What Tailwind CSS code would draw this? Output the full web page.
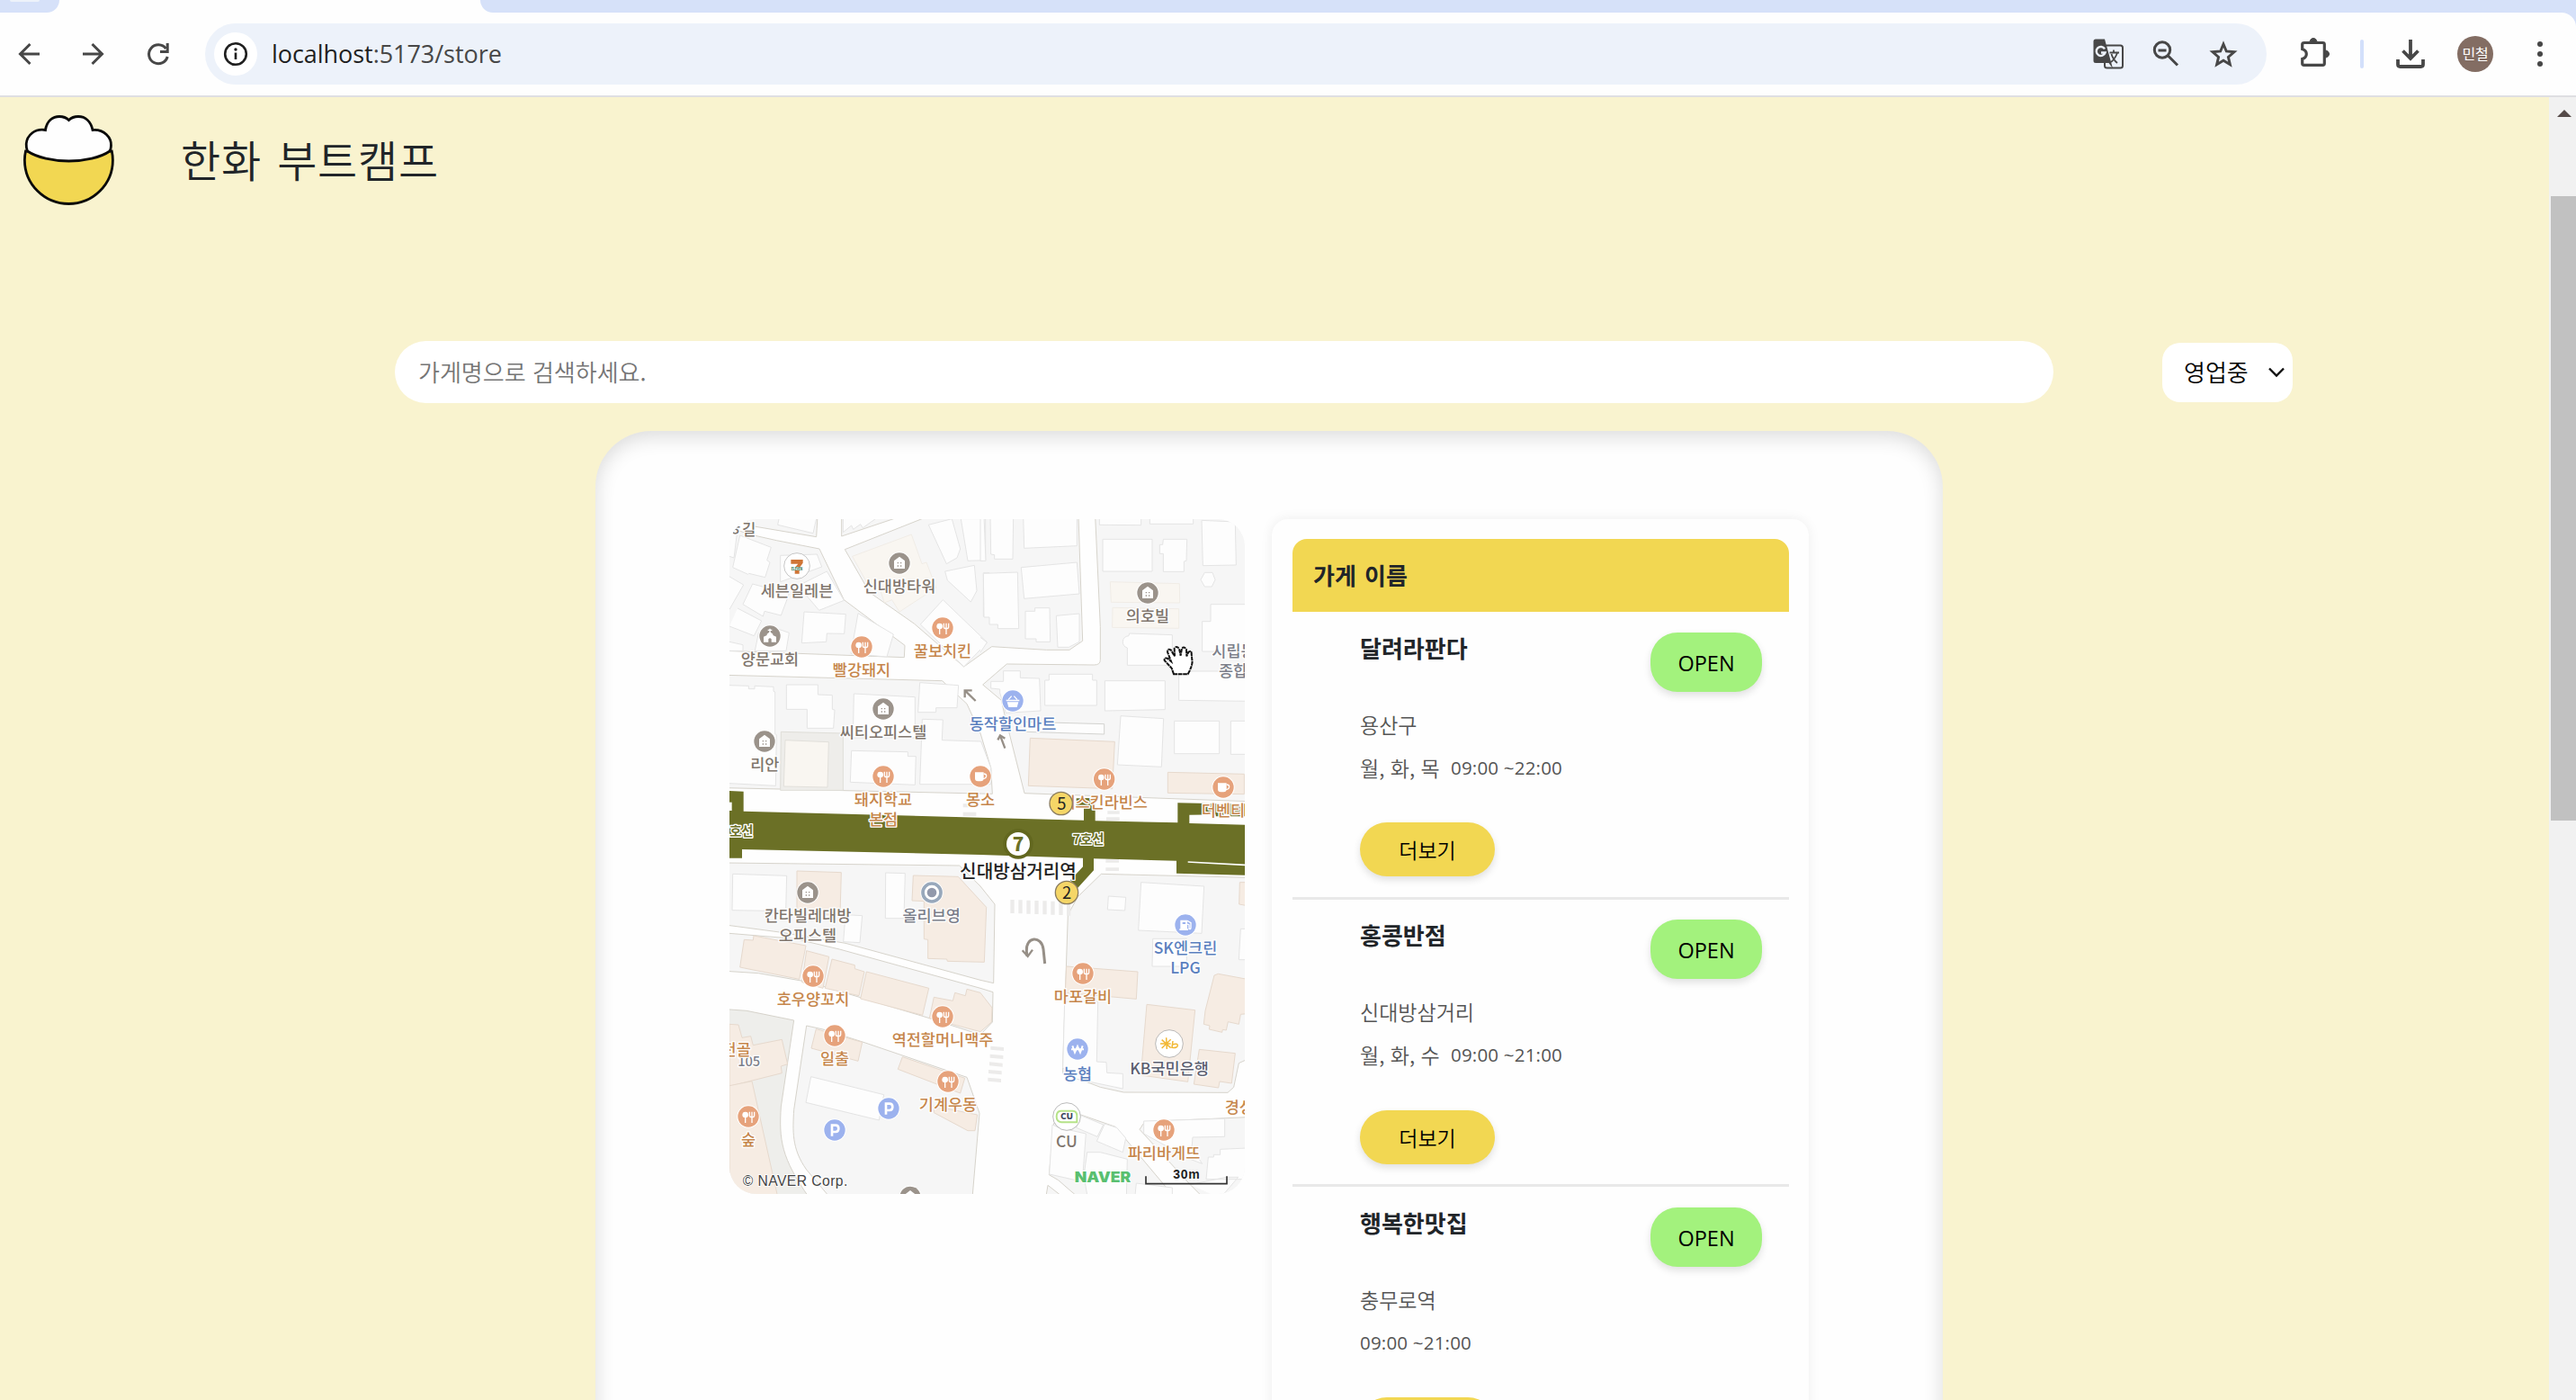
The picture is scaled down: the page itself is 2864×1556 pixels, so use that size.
<!DOCTYPE html>
<html lang="ko">
<head>
<meta charset="utf-8">
<title>한화 부트캠프</title>
<script src="https://cdn.jsdelivr.net/npm/@tailwindcss/browser@4"></script>
</head>
<body class="w-[2864px] h-[1556px] overflow-hidden flex flex-col bg-[#d6e1f9] font-['Open_Sans','Noto_Sans_CJK_KR',sans-serif] text-[#212529]">

<!-- tab strip -->
<div class="h-[14px] flex shrink-0 bg-[#fefefe]">
  <div class="w-[66px] h-[14px] bg-[#d6e1f9] rounded-br-[18px] pl-[11px]"><div class="w-[33px] h-[2px] bg-[#edf2fa] rounded-b-full"></div></div>
  <div class="w-[468px]"></div>
  <div class="flex-1 bg-[#d6e1f9] rounded-bl-[20px]"></div>
</div>

<!-- toolbar -->
<header class="h-[94px] shrink-0 flex items-center bg-[#fefefe] border-b-2 border-[#dfdfe2] rounded-tr-[16px]">
  <svg class="w-[228px] h-[92px]" viewBox="0 14 228 92" fill="none" stroke="#474747" stroke-width="3">
    <path d="M44 60H23M33.500 49L22.500 60L33.500 71"/>
    <path d="M92 60H113M102.500 49L113.500 60L102.500 71"/>
    <path d="M184.500 54A10.500 10.500 0 1 0 186.200 63"/><path d="M186.200 48V57.500H178"/>
  </svg>
  <div class="w-[2292px] h-[68px] rounded-full bg-[#edf2fa] flex items-center pl-[10px]">
    <div class="size-12 rounded-full bg-white flex items-center justify-center">
      <svg class="size-7" viewBox="0 0 28 28"><circle cx="14" cy="14" r="11.800" fill="none" stroke="#1f1f1f" stroke-width="2.600"/><rect x="12.700" y="12.500" width="2.600" height="7.500" fill="#1f1f1f"/><circle cx="14" cy="9" r="1.700" fill="#1f1f1f"/></svg>
    </div>
    <div class="ml-[16px] text-[27px] leading-9 text-[#474747] tracking-[-0.05px] whitespace-nowrap"><span class="text-[#1f1f1f]">localhost</span>:5173/store</div>
    <svg class="ml-auto mr-[24px] w-[176px] h-[68px]" viewBox="2320 26 176 68" fill="none">
      <g>
        <rect x="2340" y="50.500" width="20" height="25" rx="2.500" stroke="#474747" stroke-width="2"/>
        <path d="M2330 43.500H2340L2349 76L2344.500 70H2330Q2327.500 70 2327.500 67.500V46Q2327.500 43.500 2330 43.500Z" fill="#474747"/>
        <path d="M2340 54.300A5 5 0 1 0 2340.500 58.500H2336" stroke="#edf2fa" stroke-width="2.400"/>
        <path d="M2345.500 58.500H2356M2350 55.500V58.500M2354 59Q2351 66 2347 69M2347.500 60Q2349 66 2354 70" stroke="#474747" stroke-width="1.800"/>
      </g>
      <g stroke="#474747" stroke-width="3"><circle cx="2404" cy="55.500" r="8.700"/><path d="M2410.500 62L2421 72.500M2399.500 56H2408.500"/></g>
      <path d="M2472 49L2475.300 57L2484 57.700L2477.400 63.400L2479.400 71.800L2472 67.300L2464.600 71.800L2466.600 63.400L2460 57.700L2468.700 57Z" stroke="#474747" stroke-width="2.900"/>
    </svg>
  </div>
  <svg class="w-[204px] h-[92px]" viewBox="2520 14 204 92" fill="none">
    <path d="M2562 47.500H2582.500Q2584.300 47.500 2584.300 49.300V70.500Q2584.300 72.300 2582.500 72.300H2561.500Q2559.700 72.300 2559.700 70.500V65.500Q2564.300 64 2564.300 60Q2564.300 56 2559.700 54.500V49.300Q2559.700 47.500 2562 47.500Z" stroke="#474747" stroke-width="3.200"/>
    <path d="M2568 47A4 4.500 0 0 1 2576 47ZM2585 56A4.500 4 0 0 1 2585 64Z" fill="#474747" stroke="#474747"/>
    <rect x="2624" y="44" width="4" height="32" rx="2" fill="#d3e0fb"/>
    <path d="M2680 44V64M2671.500 56.500L2680 65L2688.500 56.500" stroke="#474747" stroke-width="3.800"/>
    <path d="M2666 66V71.500Q2666 74 2668.500 74H2691.500Q2694 74 2694 71.500V66" stroke="#474747" stroke-width="3.800"/>
  </svg>
  <div class="ml-2 size-10 rounded-full bg-[#836d63] text-white text-[16px] leading-10 text-center tracking-[-0.2px]">민철</div>
  <svg class="ml-[42px] w-5 h-8" viewBox="0 0 20 32" fill="#474747"><circle cx="10" cy="5" r="3"/><circle cx="10" cy="16" r="3"/><circle cx="10" cy="27" r="3"/></svg>
</header>

<div class="flex flex-1 min-h-0">
<main class="w-[2834px] bg-[#f9f3cf] flex flex-col overflow-hidden">
  <!-- brand -->
  <div class="flex items-center h-[100px] mt-5 pl-[26px] shrink-0">
    <svg class="w-[101px] h-[100px]" viewBox="0 0 101 100" stroke="#0a0a0a" stroke-width="2.800">
      <path d="M2.500 40Q1.400 45 1.400 50A49 48.500 0 0 0 99.400 50Q99.400 45 98.300 40Z" fill="#f2d752"/>
      <path d="M24.500 16.500C26 6 33 1.500 40 1.500Q46.500 1.500 50.500 5.500Q54.500 1.500 61 1.500C69 1.500 75 7 77 16.500C90 15.500 98 25 97.500 34Q97.500 37 96 40C86 47 68 51 50.500 51C33 51 15 47 4.500 40Q3 36 3.200 32C4 22 13 14.500 24.500 16.500Z" fill="#fefefe"/>
    </svg>
    <h1 class="ml-[74px] mb-[5px] font-['Noto_Sans_CJK_KR',sans-serif] font-[350] text-[48px] leading-[60px] tracking-[0.800px] [word-spacing:3px] whitespace-nowrap">한화 부트캠프</h1>
  </div>
  <!-- search -->
  <div class="flex items-center mt-[151px] ml-[439px] h-[69px] shrink-0">
    <div class="w-[1844px] h-[69px] rounded-full bg-white pl-[26px] text-[26px] leading-[68px] text-[#757575] font-['Noto_Sans_CJK_KR',sans-serif] font-[350]">가게명으로 검색하세요.</div>
    <div class="ml-[121px] mt-[1px] w-[145px] h-[66px] rounded-[20px] bg-white flex items-center pl-[24px] text-[26px] text-black font-['Noto_Sans_CJK_KR',sans-serif] font-[350]">
      <span class="leading-[64px] pb-[2px]">영업중</span>
      <svg class="ml-[21px] w-5 h-3" viewBox="0 0 20 12" fill="none" stroke="#111" stroke-width="2.400"><path d="M2 1.500L10 9.500L18 1.500"/></svg>
    </div>
  </div>
  <!-- content panel -->
  <section class="mt-[31px] ml-[662px] w-[1498px] h-[1400px] shrink-0 rounded-t-[62px] bg-[#fefefe] shadow-[inset_0_6px_22px_rgba(0,0,0,0.14)] flex items-start pt-[98px] pl-[149px]">
    <div class="w-[573px] h-[750px] rounded-[30px] overflow-hidden bg-[#fefefe]">
    <svg class="w-[573px] h-[750px]" viewBox="33 21 1719 2250" font-family="'Noto Sans CJK KR','Noto Sans',sans-serif">
      <defs>
        <g id="house"><circle r="38" fill="#fff"/><circle r="35" fill="#9b938b"/><path d="M-18 18V-8L0 -22L18 -8V18Z" fill="#fff"/><path d="M-7 -3h4v4h-4zM3 -3h4v4h-4zM-7 7h4v4h-4zM3 7h4v4h-4z" fill="#9b938b"/></g>
        <g id="food"><circle r="38" fill="#fff"/><circle r="35" fill="#e6a27b"/><circle cx="-10" cy="-6" r="10" fill="#fff"/><rect x="-12" y="0" width="4" height="21" fill="#fff"/><path d="M4 -16V-4Q4 2 12 2Q20 2 20 -4V-16M12 -16V21" fill="none" stroke="#fff" stroke-width="4"/></g>
        <g id="cup"><circle r="38" fill="#fff"/><circle r="35" fill="#e6a27b"/><path d="M-18 -14H11V6Q11 16 1 16H-8Q-18 16 -18 6Z" fill="#fff"/><path d="M11 -9Q20 -9 20 -2Q20 7 9 8" fill="none" stroke="#fff" stroke-width="4"/></g>
        <g id="park"><circle r="38" fill="#fff"/><circle r="35" fill="#9cb2ee"/><path d="M-9 20V-16H3Q13 -16 13 -5Q13 6 3 6H-9" fill="none" stroke="#fff" stroke-width="8"/></g>
      </defs>
      <rect x="33" y="21" width="1719" height="2250" fill="#fefefe"/>
      <!-- city blocks -->
      <g fill="#f6f6f6" stroke="#d6d3cb" stroke-width="3">
        <path d="M70 10L115 45L323 80L327 10ZM33 50L110 74L190 92L333 120L415 290L618 442L616 482L20 460V45ZM407 10L407 78L610 10Z"/>
        <path d="M418 122L700 10H1197L1211 427L1167 457L1090 457L908 446L815 513L650 370L500 265Z"/>
        <path d="M20 541L743 560L825 637L870 735L905 850L910 937L20 917Z"/>
        <path d="M1253 10L1270 380V490Q1270 507 1250 507L958 504L878 573L940 625L950 670L1017 935L1760 962V10Z"/>
      </g>
      <g transform="translate(0 1110)" fill="#f6f6f6" stroke="#d6d3cb" stroke-width="3">
        <path d="M20 57L800 66L870 135L918 195L914 458L870 448L420 325L200 288L20 264Z"/>
        <path d="M20 291L250 310L400 345L870 475L912 488L910 588L870 630L700 575L300 455L130 425L20 418Z"/>
        <path d="M20 545L90 550L248 582L205 870C198 980 205 1040 300 1175H20Z" fill="#eeeeeb"/>
        <path d="M290 600L345 612L480 655L825 772L867 892L843 1175H370L290 1080C240 1010 244 950 248 880Z"/>
      </g>
      <g transform="translate(870 1110)" fill="#f6f6f6" stroke="#d6d3cb" stroke-width="3">
        <path d="M403 94L890 106V712L862 725L845 805L825 823L478 822L400 805L322 775L275 760V735L292 230L325 170Z"/>
        <path d="M245 925L335 897L450 937L650 1175H330L300 1150L260 1115L229 1097ZM225 1132L280 1175H218Z"/>
        <path d="M548 920L890 905V1175H745L700 1130L531 946Z"/>
      </g>
      <!-- buildings -->
      <g fill="#fdfdfd" stroke="#e4e4e4" stroke-width="3">
        <path d="M200 10L194 40L312 68L325 10M68 75L172 115L158 158L168 165L152 215L98 202L95 205L44 182ZM33 60L58 70L48 150L33 145M203 142L325 138L341 180L203 230ZM262 243L358 195L415 292L332 325ZM20 205L80 240L33 322M110 237L232 270L205 342L150 328L145 345L78 305ZM60 318L140 360L115 410L33 378M160 375L232 400L222 460L118 460L130 400ZM282 330L421 338L416 403L358 402L356 430L274 434ZM462 335L580 405L558 480L438 470Z"/>
        <path d="M412 20V65L440 42L446 55L470 38L478 50L520 20M697 40L775 20L803 120L792 150L757 170ZM805 20L887 20V158L828 160ZM752 195L850 175L858 260L838 297L760 225ZM670 372L745 290L893 432L815 513ZM880 200H900V345H880Z"/>
        <path d="M33 575L97 577V587H117V577L180 580V595L185 597V737L190 740L187 910L33 902M223 573H328V606L376 608V655L384 657L380 718H292V655H223ZM448 603L652 614V750H445ZM668 566L797 575L792 650H722V665H662ZM676 688L745 690L742 758L872 762L905 850V905H668ZM440 793L628 797V812L655 812L652 907L436 898ZM33 430L78 440V460H33"/>
      </g>
      <g fill="#fdfdfd" stroke="#e4e4e4" stroke-width="3" transform="translate(870 0)">
        <path d="M143 10L146 118L322 110V10M33 10L35 138L47 140V154H108L110 10M0 10V160H18L12 10M136 182L322 165L330 270L146 286ZM10 202L124 198L128 386H58V372H30V348H12ZM150 328H182V317H231L233 430H186V420H150ZM253 343L330 336V430L295 448H258ZM397 10V40L536 41V10M565 10V37H710V10M738 25L850 30L853 174L742 176ZM408 88H573V195H408ZM610 88H689L687 160L679 162V196H610V136H598V106H608ZM748 199H774L783 223L772 246H748L735 223ZM768 305H890V462H740V362H768ZM497 402L640 407V508L490 508V450Q475 445 475 430Q476 412 495 410ZM662 528H890V628L662 625ZM77 527H133V550L197 552L201 660L85 667L65 600V588L35 585V562H77ZM229 538H374V558H388V642H215V558H229ZM415 560H616V656L415 660ZM468 677L611 686L604 847L457 840ZM647 694H797V803H647ZM835 694H890V805H835ZM0 415L22 432L0 465"/>
        <path d="M150 697L413 704V738L150 730Z" stroke="#d3d3d0"/>
      </g>
      <g fill="#fdfdfd" stroke="#e4e4e4" stroke-width="3" transform="translate(0 1110)">
        <path d="M44 94L224 100L221 218L42 215ZM554 90L619 92L615 242H553ZM420 230L476 233L468 323L413 320ZM305 770L548 830L532 915L288 856Z"/>
      </g>
      <g fill="#fdfdfd" stroke="#e4e4e4" stroke-width="3" transform="translate(870 1110)">
        <path d="M536 122L746 135L738 292L527 282ZM427 168L485 172L482 216L424 213ZM575 310H688V402H573ZM868 277H890V380H862ZM281 520H392L388 720L420 722L422 757L475 760V810L322 778L275 740Z"/>
        <path d="M330 897L410 930L390 970L320 940ZM415 927L455 940L485 975L475 1022L388 985ZM262 940L352 960L340 1120L230 1095L240 930ZM356 1022L400 1022L490 1045L487 1175H358L345 1100ZM545 918L815 910V970L708 972L705 1010L740 1060L700 1045L545 960ZM890 1008L800 1012V1030H778V1038H760L753 1112H890M700 1130L820 1105L860 1105L800 1175M520 1125L640 1140V1175H515Z"/>
      </g>
      <g fill="#f9f6f1" stroke="#f0ece6" stroke-width="3">
        <path d="M443 145L640 72L675 170L690 165L722 250L600 330L575 290L550 300L535 255L490 230Z"/>
        <path d="M205 730L412 735V925H203Z" fill="#eeedea" stroke="#dfded8"/><path d="M219 758L364 764L360 915L214 912Z" stroke="#e2e0db"/>
        <path d="M1303 230L1534 236L1535 300L1306 298ZM1311 316L1532 320V385L1310 382Z"/>
      </g>
      <g fill="#f6ece3" stroke="#e6d9cd" stroke-width="3">
        <path d="M1036 751L1318 763L1310 920L1030 910ZM1495 865L1750 871V938L1495 934Z"/>
        <g transform="translate(0 1110)"><path d="M258 84L406 89L402 230H258ZM646 99L796 103L890 205L883 388L760 385L758 378L695 376V313L682 311V185L642 183ZM82 313L112 315L114 300L288 333L266 445L68 405ZM290 350L365 370L345 475L275 455ZM375 378L451 398V410L483 420L465 500L352 475ZM490 420L698 475L677 565L470 510ZM715 505L778 517L785 490L820 500L825 478L870 490L909 540L907 588L870 620L700 575ZM322 611L476 655L462 718L306 675ZM610 704L818 775L803 825L595 745ZM715 868L860 897L852 950H828L715 890ZM33 595L63 597L75 640L104 635L112 665L208 646L227 728L205 735L208 758L33 802Z"/><path d="M33 800L108 785L195 1175H33Z"/></g>
        <g transform="translate(870 1110)"><path d="M287 402L525 420L520 511L283 490ZM555 529L716 548L692 787L535 765ZM730 679L850 692L838 792L798 786L794 807L712 795ZM780 432L793 427L890 445V560L868 562L862 595L826 587L820 615L808 613L806 622L763 612L765 600L745 595L750 550ZM865 122H890V200L863 195Z"/></g>
      </g>
      <!-- crosswalks -->
      <g fill="#ecebea">
        <path d="M812 998h44v13h-44zM812 970h44v12h-44z"/>
        <g transform="translate(870 0)"><path d="M424 994h40v10h-40zM420 1015h44v11h-44z"/></g>
        <g transform="translate(870 1110)"><path d="M100 180h13v45h-13zM127 181h13v45h-13zM154 182h13v45h-13zM181 183h13v45h-13zM208 184h13v45h-13zM235 185h13v45h-13zM262 186h13v45h-13zM288 188h13v45h-13zM418 45h44v11h-44zM418 73h44v11h-44zM34 668l44 4v12l-44-4zM32 695l44 4v12l-44-4zM30 721l44 4v12l-44-4zM27 747l44 4v12l-44-4zM25 773l44 4v12l-44-4z"/></g>
      </g>
      <!-- subway line -->
      <path d="M33 927L80 929V995L870 1016L1215 1025V952H1253V1027L1528 1033V967L1665 970V1006L1567 1007V1035L1752 1040V1208L1524 1202V1160L1248 1153V1192L1195 1250L1170 1225L1212 1180V1151L870 1140L75 1122V1151H33Z" fill="#6b7026"/>
      <path d="M1190 952H1250V980H1190ZM1655 970H1752V1012H1655Z" fill="#6b7026"/>
      <path d="M1562 1164L1752 1174" stroke="#fefefe" stroke-width="5"/><path d="M33 965h8v28h-8z" fill="#fefefe"/>
      <circle cx="996" cy="1104" r="50" fill="#62671f"/>
      <circle cx="996" cy="1104" r="39" fill="#fefefe"/>
      <!-- direction arrows -->
      <g fill="none" stroke="#968f87" stroke-width="7"><path d="M854 627L822 596M818 616V592H842M952 785L937 745M928 757L936 742L952 752"/><path d="M1085 1503L1080 1455C1074 1408 1020 1412 1024 1462L1026 1478" stroke-width="9"/><path d="M1010 1459L1028 1479L1044 1457" stroke-width="7"/></g>
      <!-- markers -->
      <g>
        <use href="#house" x="600" y="168"/><use href="#house" x="546" y="654"/><use href="#house" x="150" y="762"/><use href="#house" x="1428" y="267"/><use href="#house" x="294" y="1266"/><use href="#house" x="636" y="2281"/>
        <use href="#food" x="744" y="384"/><use href="#food" x="474" y="447"/><use href="#food" x="546" y="879"/><use href="#food" x="1283" y="888"/><use href="#food" x="312" y="1545"/><use href="#food" x="744" y="1680"/><use href="#food" x="384" y="1743"/><use href="#food" x="762" y="1896"/><use href="#food" x="96" y="2013"/><use href="#food" x="1212" y="1536"/><use href="#food" x="1482" y="2058"/>
        <use href="#cup" x="870" y="879"/><use href="#cup" x="1680" y="915"/>
        <use href="#park" x="564" y="1986"/><use href="#park" x="384" y="2058"/>
        <g transform="translate(168 411)"><circle r="38" fill="#fff"/><circle r="35" fill="#9b938b"/><path d="M-21 20V2L-10 -3V-7L0 -14L10 -7V-3L21 2V20H5V10Q0 4 -5 10V20Z" fill="#fff"/><path d="M0 -25V-12M-7 -20H7" stroke="#fff" stroke-width="4"/></g>
        <g transform="translate(258 177)"><circle r="43" fill="#fff" stroke="#aaa" stroke-width="2"/><path d="M-20 -21H20V-10L8 7V26H-7V5L4 -7H-20Z" fill="#cf7536"/><rect x="-21" y="3" width="42" height="12" fill="#fff"/><text y="14" font-size="14" font-weight="900" text-anchor="middle" fill="#3c7d5c" textLength="38" lengthAdjust="spacingAndGlyphs">ELEVEN</text></g>
        <g transform="translate(978 627)"><circle r="38" fill="#fff"/><circle r="35" fill="#9cb2ee"/><path d="M-22 -4H22V1H-22ZM-19 4H19L14 21H-14Z" fill="#fff"/><path d="M-15 -4L-4 -16M15 -4L4 -16" stroke="#fff" stroke-width="4"/></g>
        <g transform="translate(708 1266)"><circle r="38" fill="#fff"/><circle r="30" fill="#fff" stroke="#98a8bb" stroke-width="11"/><circle r="16" fill="#9299ab"/></g>
        <g transform="translate(1554 1374)"><circle r="38" fill="#fff"/><circle r="35" fill="#9cb2ee"/><path d="M-17 -16H6V13H9V18H-20V13H-17Z" fill="#fff"/><path d="M-10 -9H0V-3H-10Z" fill="#9cb2ee"/><path d="M6 -14L18 -7V9Q18 15 12 13V0L6 -3" fill="none" stroke="#fff" stroke-width="4"/></g>
        <g transform="translate(1194 1788)"><circle r="38" fill="#fff"/><circle r="35" fill="#9cb2ee"/><path d="M-17 -11L-9 11L0 -9L9 11L17 -11M-21 1H21" fill="none" stroke="#fff" stroke-width="6"/></g>
        <g transform="translate(1500 1770)"><circle r="46" fill="#fff" stroke="#999" stroke-width="2"/><path d="M-10 -20L-8 18M-30 0H5M-25 -13L5 14M5 -14L-25 15M12 -9L9 13Q28 15 28 5Q26 -2 11 3" fill="none" stroke="#f2b835" stroke-width="4.500"/></g>
        <g transform="translate(1158 2013)"><circle r="46" fill="#fff" stroke="#999" stroke-width="2"/><path d="M-20 -19H20Q34 -19 34 -2V19H-18Q-34 17 -34 0Q-34 -18 -20 -19Z" fill="none" stroke="#b6e389" stroke-width="6"/><text y="10" font-size="28" font-weight="900" text-anchor="middle" fill="#3f4a63" textLength="42" lengthAdjust="spacingAndGlyphs">CU</text></g>
      </g>
      <!-- labels -->
      <g font-size="52.500" font-weight="500" text-anchor="middle" stroke="#fefefe" stroke-width="8" stroke-linejoin="round" paint-order="stroke" fill="#80766d">
        <text x="75" y="75" font-size="50">ㅎ길</text>
        <text x="258" y="279">세븐일레븐</text><text x="600" y="265">신대방타워</text><text x="168" y="507">양문교회</text><text x="546" y="750">씨티오피스텔</text><text x="151" y="858">리안</text><text x="1428" y="363">의호빌</text>
        <text x="294" y="1362">칸타빌레대방</text><text x="294" y="1427">오피스텔</text><text x="1158" y="2114">CU</text>
        <g fill="#7c7f8a"><text x="707" y="1362">올리브영</text><text x="98" y="1845" font-size="44">105</text><text x="1642" y="480" text-anchor="start">시립동작</text><text x="1665" y="545" text-anchor="start">종합사</text></g>
        <text x="1500" y="1873" fill="#5b5f70">KB국민은행</text>
        <g fill="#c6864b"><text x="744" y="480">꿀보치킨</text><text x="474" y="543">빨강돼지</text><text x="546" y="975">돼지학교</text><text x="546" y="1040">본점</text><text x="870" y="975">몽소</text><text x="1283" y="984">배스킨라빈스</text><text x="1680" y="1010">더벤티</text><text x="312" y="1641">호우양꼬치</text><text x="744" y="1776">역전할머니맥주</text><text x="384" y="1839">일출</text><text x="762" y="1992">기계우동</text><text x="96" y="2109">숲</text><text x="1212" y="1632">마포갈비</text><text x="1482" y="2154">파리바게뜨</text><text x="56" y="1808">전골</text><text x="1685" y="2001" text-anchor="start">경성</text></g>
        <g fill="#5b80bf"><text x="978" y="723">동작할인마트</text><text x="1554" y="1470">SK엔크린</text><text x="1554" y="1536">LPG</text><text x="1194" y="1890">농협</text></g>
        <g fill="#6b7026" font-size="43" font-weight="700"><text x="1230" y="1104">7호선</text><text x="73" y="1078">호선</text></g>
        <text x="996" y="1219" font-size="60.500" fill="#222">신대방삼거리역</text>
      </g>
      <text x="996" y="1127" font-size="62" font-weight="900" text-anchor="middle" fill="#6b7026">7</text>
      <g fill="#f5d667" stroke="#8b7d60" stroke-width="4"><circle cx="1139" cy="969" r="38"/><circle cx="1158" cy="1266" r="38"/></g>
      <g font-size="55" font-weight="400" text-anchor="middle" fill="#222"><text x="1141" y="991">5</text><text x="1158" y="1288">2</text></g>
      <!-- grab cursor -->
      <path d="M1515 538L1508 518L1484 492Q1482 482 1494 485L1506 495L1494 464Q1495 450 1506 458L1518 478L1517 452Q1524 442 1533 453L1538 476L1542 452Q1550 444 1557 456L1558 478L1564 464Q1575 458 1574 470L1576 490Q1580 505 1562 538Z" fill="#fff" stroke="#111" stroke-width="6" stroke-dasharray="14 2"/>
      <!-- attribution and scale -->
      <text x="77" y="2244" font-family="'Liberation Sans',sans-serif" font-size="47" fill="#444" stroke="#fff" stroke-width="5" paint-order="stroke" textLength="350">© NAVER Corp.</text>
      <text x="1184" y="2232" font-family="Inter,sans-serif" font-weight="900" font-size="48" fill="#5abf70" stroke="#fff" stroke-width="5" paint-order="stroke" textLength="188" lengthAdjust="spacingAndGlyphs">NAVER</text>
      <text x="1557" y="2219" text-anchor="middle" font-family="'Liberation Sans',sans-serif" font-weight="700" font-size="42" fill="#222" stroke="#fff" stroke-width="5" paint-order="stroke" textLength="88">30m</text>
      <path d="M1422 2212V2237H1692V2212" fill="none" stroke="#333" stroke-width="5"/>
    </svg>
    </div>

    <!-- store list -->
    <div class="ml-[30px] w-[597px] h-[1200px] rounded-[18px] bg-[#fefefe] shadow-[0_0_14px_rgba(0,0,0,0.07)] pt-[22px] px-[23px]">
      <div class="w-[552px] h-[81px] bg-[#f2d752] rounded-t-[16px] pl-[23px] text-[26px] leading-[79px] font-bold font-['Noto_Sans_CJK_KR',sans-serif] [word-spacing:2px]">가게 이름</div>
      <article class="w-[552px] h-[320px] border-b-[3px] border-[#e9e9e9] flex justify-between pt-[23px] pl-[75px] pr-[30px]">
        <div class="flex flex-col items-start whitespace-nowrap">
          <h2 class="-mt-[2px] font-['Noto_Sans_CJK_KR',sans-serif] font-bold text-[26px] leading-[38px]">달려라판다</h2>
          <p class="mt-[47px] text-[23px] leading-[38px] text-[#555] font-['Noto_Sans_CJK_KR',sans-serif] font-[350]">용산구</p>
          <p class="mt-[10px] text-[20.500px] leading-[38px] tracking-[0.200px] text-[#555] flex"><span class="font-['Noto_Sans_CJK_KR',sans-serif] font-[350] text-[23px] tracking-normal w-[101px]">월, 화, 목</span><span>09:00 ~22:00</span></p>
          <button class="mt-[42px] w-[150px] h-[60px] rounded-[30px] bg-[#f2d752] text-black text-[23px] leading-[60px] font-['Noto_Sans_CJK_KR',sans-serif] font-[350] shadow-[0_4px_8px_rgba(0,0,0,0.12)]">더보기</button>
        </div>
        <button class="w-[124px] h-[66px] rounded-[30px] bg-[#a3f27d] text-black text-[23.500px] leading-[68px] shadow-[0_4px_8px_rgba(0,0,0,0.12)]">OPEN</button>
      </article>
      <article class="w-[552px] h-[319px] border-b-[3px] border-[#e9e9e9] flex justify-between pt-[22px] pl-[75px] pr-[30px]">
        <div class="flex flex-col items-start whitespace-nowrap">
          <h2 class="-mt-[2px] font-['Noto_Sans_CJK_KR',sans-serif] font-bold text-[26px] leading-[38px]">홍콩반점</h2>
          <p class="mt-[47px] text-[23px] leading-[38px] text-[#555] font-['Noto_Sans_CJK_KR',sans-serif] font-[350]">신대방삼거리</p>
          <p class="mt-[10px] text-[20.500px] leading-[38px] tracking-[0.200px] text-[#555] flex"><span class="font-['Noto_Sans_CJK_KR',sans-serif] font-[350] text-[23px] tracking-normal w-[101px]">월, 화, 수</span><span>09:00 ~21:00</span></p>
          <button class="mt-[43px] w-[150px] h-[60px] rounded-[30px] bg-[#f2d752] text-black text-[23px] leading-[60px] font-['Noto_Sans_CJK_KR',sans-serif] font-[350] shadow-[0_4px_8px_rgba(0,0,0,0.12)]">더보기</button>
        </div>
        <button class="w-[124px] h-[66px] rounded-[30px] bg-[#a3f27d] text-black text-[23.500px] leading-[68px] shadow-[0_4px_8px_rgba(0,0,0,0.12)]">OPEN</button>
      </article>
      <article class="w-[552px] h-[320px] border-b-[3px] border-[#e9e9e9] flex justify-between pt-[23px] pl-[75px] pr-[30px]">
        <div class="flex flex-col items-start whitespace-nowrap">
          <h2 class="-mt-[2px] font-['Noto_Sans_CJK_KR',sans-serif] font-bold text-[26px] leading-[38px]">행복한맛집</h2>
          <p class="mt-[47px] text-[23px] leading-[38px] text-[#555] font-['Noto_Sans_CJK_KR',sans-serif] font-[350]">충무로역</p>
          <p class="mt-[10px] text-[20.500px] leading-[38px] tracking-[0.200px] text-[#555]">09:00 ~21:00</p>
          <button class="mt-[42px] w-[150px] h-[60px] rounded-[30px] bg-[#f2d752] text-black text-[23px] leading-[60px] font-['Noto_Sans_CJK_KR',sans-serif] font-[350]">더보기</button>
        </div>
        <button class="w-[124px] h-[66px] rounded-[30px] bg-[#a3f27d] text-black text-[23.500px] leading-[68px] shadow-[0_4px_8px_rgba(0,0,0,0.12)]">OPEN</button>
      </article>
    </div>
  </section>
</main>
<!-- scrollbar -->
<aside class="w-[30px] bg-[#f1f1f1] flex flex-col items-end">
  <svg class="mt-[14px] mr-[5px] w-4 h-2" viewBox="0 0 16 8" fill="#554a48"><path d="M8 0L16 8H0Z"/></svg>
  <div class="mt-[88px] w-7 h-[694px] bg-[#c1c1c1]"></div>
</aside>
</div>
</body>
</html>
